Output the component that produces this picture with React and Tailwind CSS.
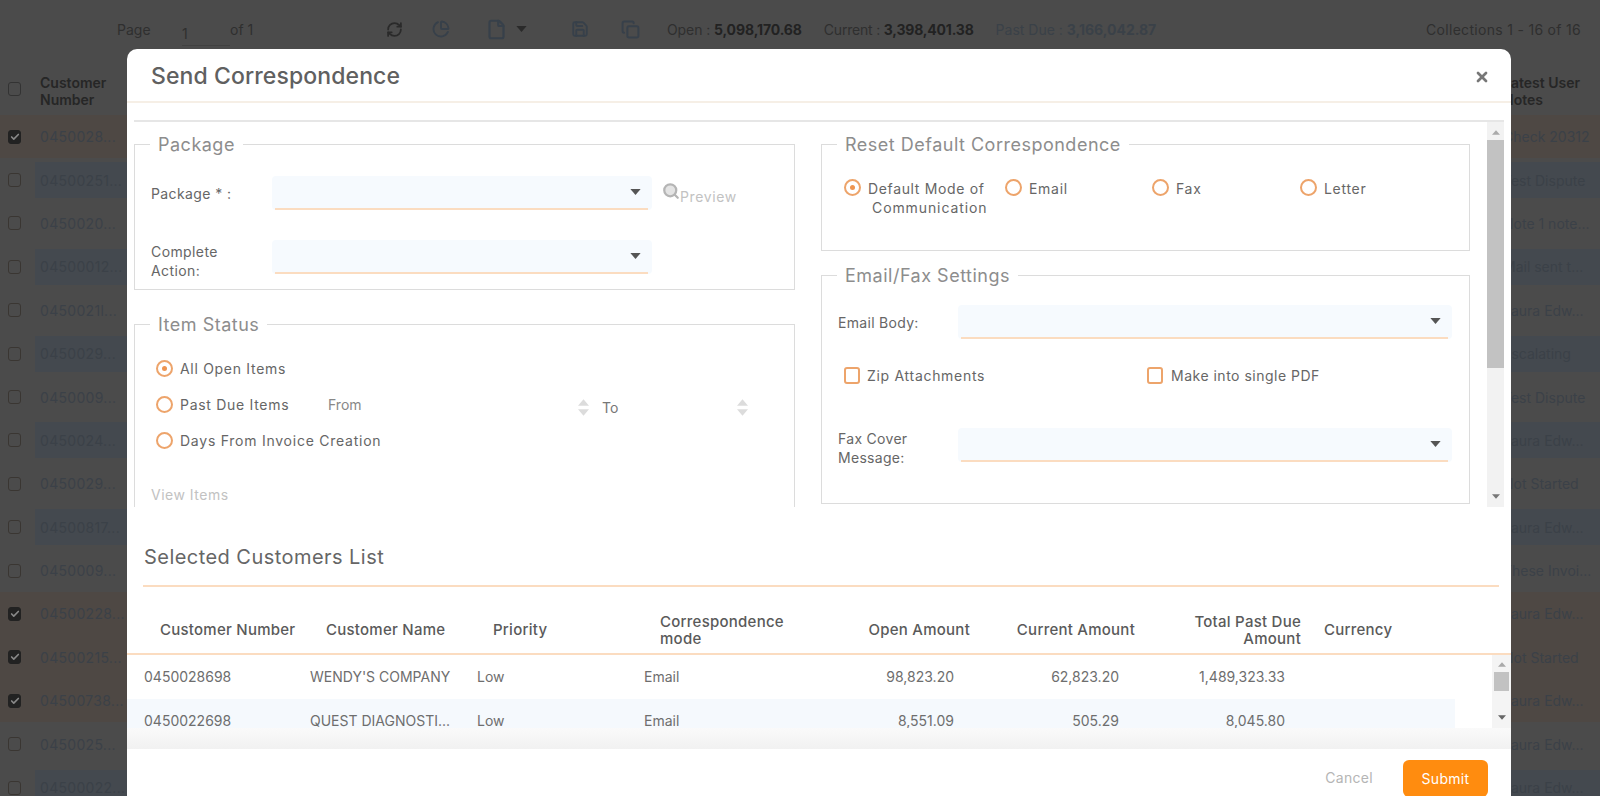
import React from 'react';
import { RefreshCw, PieChart, File, Save, Copy, Check, X, Search } from 'lucide-react';

const leftRows = [
  ['0450028...', true, 'o', 'Check 20312'],
  ['04500251...', false, 'b', 'Test Dispute'],
  ['0450020...', false, '', 'Note 1 note...'],
  ['04500012...', false, 'b', 'Mail sent t...'],
  ['0450021l...', false, '', 'Laura Edw...'],
  ['0450029...', false, 'b', 'Escalating'],
  ['0450009...', false, '', 'Test Dispute'],
  ['0450024...', false, 'b', 'Laura Edw...'],
  ['0450029...', false, '', 'Not Started'],
  ['04500817...', false, 'b', 'Laura Edw...'],
  ['0450009...', false, '', 'These Invoi...'],
  ['04500228...', true, 'o', 'Laura Edw...'],
  ['04500215...', true, 'o', 'Not Started'],
  ['04500738...', true, 'o', 'Laura Edw...'],
  ['0450025...', false, '', 'Laura Edw...'],
  ['04500022...', false, 'b', 'Laura Edw...'],
];

function Caret({ className }) {
  return (
    <svg width="11" height="6" viewBox="0 0 12 7" className={className}>
      <path d="M0 0h12L6 7z" fill="currentColor" />
    </svg>
  );
}

function SelectBox({ className }) {
  return (
    <div className={`relative h-[34px] bg-[#f6fafe] rounded-[4px] ${className}`}>
      <div className="absolute left-[3px] right-[4px] bottom-0 h-[2px] bg-[#fbdcc0]" />
      <Caret className="absolute right-[11px] top-[13px] text-[#555]" />
    </div>
  );
}

function Radio({ on }) {
  return (
    <span className="flex items-center justify-center w-[17px] h-[17px] rounded-full border-2 border-[#eda46b] shrink-0">
      {on && <span className="w-[5px] h-[5px] rounded-full bg-[#ee9450]" />}
    </span>
  );
}

function Spin() {
  return (
    <span className="flex flex-col gap-[3px] mt-[6px] text-[#dcdcdc]">
      <Caret className="rotate-180 w-[11px] h-[7px]" />
      <Caret className="w-[11px] h-[7px]" />
    </span>
  );
}

function Box({ legend, className, children }) {
  return (
    <fieldset className={`border border-[#dcdcdc] pl-[16px] ${className}`}>
      <legend className="-ml-[1px] px-[8px] pt-[2px] text-[18px] leading-[24px] text-[#8d8d8d] tracking-[0.5px]">{legend}</legend>
      {children}
    </fieldset>
  );
}

export default function App() {
  return (
    <div className="relative w-[1600px] h-[796px] overflow-hidden bg-[#4b4b4b] text-[#2e2e2e] text-[14px]" style={{ fontFamily: 'Inter, "Noto Sans", sans-serif' }}>
      {/* dimmed page behind the dialog */}
      <div className="flex items-center h-[58px] pt-[0px] text-[#2f2f2f]">
        <span className="ml-[117px] w-[65px]">Page</span>
        <span className="w-[48px] border-b border-[#414141] h-[34px] pt-[11px]">1</span>
        <span className="w-[130px]">of 1</span>
        <div className="flex items-center text-[#37404a]">
          <RefreshCw size={17} strokeWidth={2.5} className="ml-[26px] text-[#2a2a2a]" />
          <PieChart size={18} strokeWidth={2.5} className="ml-[29px]" />
          <File size={21} strokeWidth={2.5} className="ml-[36px]" />
          <Caret className="ml-[9px] text-[#2a2a2a]" />
          <Save size={18} strokeWidth={2.5} className="ml-[44px]" />
          <Copy size={19} strokeWidth={2.5} className="ml-[32px]" />
        </div>
        <span className="ml-[27px] -tracking-[0.1px]">Open : <b className="text-[#222]">5,098,170.68</b></span>
        <span className="ml-[22px] -tracking-[0.2px]">Current : <b className="text-[#222]">3,398,401.38</b></span>
        <span className="ml-[22px] text-[#3a4148]">Past Due : <b>3,166,042.87</b></span>
        <span className="ml-auto mr-[19px] tracking-[0.3px]">Collections 1 - 16 of 16</span>
      </div>
      <div className="flex items-center h-[57px] font-semibold text-[#262626] leading-[17px]">
        <span className="ml-[8px] mt-[4px] w-[13px] h-[14px] border border-[#333] rounded-[3px]" />
        <span className="ml-[19px] mt-[8px] w-[80px]">Customer Number</span>
        <span className="ml-auto mt-[8px] w-[97px]">Latest User Notes</span>
      </div>
      <div className="flex flex-col">
        {leftRows.map(([n, c, t, note], i) => (
          <div key={i} className={`flex items-center h-[43.4px] ${t === 'o' ? 'bg-[#4e4844]' : ''}`}>
            <span className={`ml-[8px] w-[13px] h-[14px] rounded-[3px] flex items-center justify-center border ${c ? 'bg-[#222] border-[#222]' : 'border-[#3a3632]'}`}>
              {c && <Check size={10} strokeWidth={4} className="text-[#888]" />}
            </span>
            <span className={`ml-[14px] w-[95px] h-[36px] pl-[5px] flex items-center text-[#3b4148] tracking-[0.3px] ${t === 'b' ? 'bg-[#44494f]' : ''}`}>{n}</span>
            <span className={`ml-auto w-[97px] h-[36px] flex items-center whitespace-nowrap text-[#3b4148] ${t === 'b' ? 'bg-[#44494f]' : ''}`}>{note}</span>
          </div>
        ))}
      </div>

      {/* dialog */}
      <div className="absolute left-[127px] top-[49px] w-[1384px] h-[747px] bg-white rounded-t-[10px] overflow-hidden flex flex-col text-[#666]">
        <div className="flex items-center justify-between h-[54px] pt-[3px] shrink-0 border-b-2 border-[#f6efe6] pl-[24px] pr-[21px]">
          <span className="text-[23px] font-medium text-[#606060] tracking-[0.1px]">Send Correspondence</span>
          <X size={16} strokeWidth={4} className="text-[#777]" />
        </div>
        <div className="mx-[7px] mt-[17px] h-[387px] shrink-0 border-t-2 border-[#e6e6e6] flex">
          <div className="flex-1 flex gap-[26px] overflow-hidden pr-[16px]">
            <div className="w-[661px] shrink-0">
              <Box legend="Package" className="mt-[9px] h-[159px]">
                <div className="flex items-center mt-[19px]">
                  <span className="w-[121px] tracking-[0.4px]">Package * :</span>
                  <SelectBox className="w-[380px]" />
                  <Search size={18} strokeWidth={3} fill="#e4e4e4" className="ml-[10px] -mt-[4px] text-[#b5b5b5]" />
                  <span className="mt-[6px] text-[#c2c2c2] tracking-[0.6px]">Preview</span>
                </div>
                <div className="flex items-center mt-[24px]">
                  <span className="w-[121px] mt-[8px] leading-[19px] tracking-[0.4px]">Complete<br />Action:</span>
                  <SelectBox className="w-[380px]" />
                </div>
              </Box>
              <Box legend="Item Status" className="mt-[21px] h-[240px] border-b-0">
                <div className="flex items-center gap-[7px] ml-[5px] h-[21px] mt-[21px]"><Radio on /><span className="tracking-[0.7px]">All Open Items</span></div>
                <div className="flex items-center h-[21px] mt-[15px] ml-[5px]">
                  <Radio />
                  <span className="ml-[7px] w-[148px] tracking-[0.7px]">Past Due Items</span>
                  <span className="w-[250px] text-[#888]">From</span>
                  <Spin />
                  <span className="ml-[13px] w-[135px] mt-[6px] text-[#777]">To</span>
                  <Spin />
                </div>
                <div className="flex items-center gap-[7px] h-[21px] ml-[5px] mt-[15px]"><Radio /><span className="tracking-[0.75px]">Days From Invoice Creation</span></div>
                <div className="mt-[33px] text-[#c2c2c2] tracking-[0.5px]">View Items</div>
              </Box>
            </div>
            <div className="w-[649px] shrink-0">
              <Box legend="Reset Default Correspondence" className="mt-[9px] h-[120px]">
                <div className="flex items-start mt-[22px] ml-[6px]">
                  <div className="w-[161px] flex items-start gap-[7px]">
                    <Radio on />
                    <span className="leading-[19px] tracking-[0.65px]">Default Mode of<br /><span className="ml-[4px] tracking-[0.9px]">Communication</span></span>
                  </div>
                  <div className="w-[147px] flex items-start gap-[7px]"><Radio /><span className="leading-[19px] tracking-[0.7px]">Email</span></div>
                  <div className="w-[148px] flex items-start gap-[7px]"><Radio /><span className="leading-[19px] tracking-[0.7px]">Fax</span></div>
                  <div className="flex items-start gap-[7px]"><Radio /><span className="leading-[19px] tracking-[0.7px]">Letter</span></div>
                </div>
              </Box>
              <Box legend="Email/Fax Settings" className="mt-[11px] h-[242px]">
                <div className="flex items-center mt-[17px]">
                  <span className="w-[120px] tracking-[0.3px]">Email Body:</span>
                  <SelectBox className="w-[494px]" />
                </div>
                <div className="flex items-center mt-[26px] ml-[6px]">
                  <span className="w-[16px] h-[17px] border-2 border-[#eda46b] rounded-[3px]" />
                  <span className="ml-[7px] w-[280px] tracking-[0.7px]">Zip Attachments</span>
                  <span className="w-[16px] h-[17px] border-2 border-[#eda46b] rounded-[3px]" />
                  <span className="ml-[8px] tracking-[0.5px]">Make into single PDF</span>
                </div>
                <div className="flex items-center mt-[37px]">
                  <span className="w-[120px] mt-[6px] leading-[19px] tracking-[0.3px]">Fax Cover<br />Message:</span>
                  <SelectBox className="w-[494px]" />
                </div>
              </Box>
            </div>
          </div>
          <div className="w-[17px] shrink-0 bg-[#f2f2f2] flex flex-col items-center text-[#777]">
            <Caret className="rotate-180 w-[8px] h-[5px] mt-[8px] text-[#aaa]" />
            <div className="w-full h-[228px] mt-[5px] bg-[#c2c2c2]" />
            <Caret className="w-[8px] h-[5px] mt-auto mb-[8px]" />
          </div>
        </div>

        <div className="ml-[17px] mt-[36px] text-[20px] leading-[28px] text-[#666] tracking-[0.45px] shrink-0">Selected Customers List</div>
        <div className="ml-[16px] mr-[12px] mt-[14px] border-t-2 border-[#fbdcc0] shrink-0" />
        <div className="grid grid-cols-[166px_167px_167px_156px_154px_165px_166px_1fr] pl-[33px] pt-[19px] items-center h-[68px] shrink-0 border-b-2 border-[#fbdcc0] font-medium text-[#5a5a5a] text-[15px] tracking-[0.25px] leading-[17px]">
          <span>Customer Number</span>
          <span>Customer Name</span>
          <span>Priority</span>
          <span>Correspondence<br />mode</span>
          <span className="text-right">Open Amount</span>
          <span className="text-right">Current Amount</span>
          <span className="text-right">Total Past Due<br />Amount</span>
          <span className="pl-[23px]">Currency</span>
        </div>
        <div className="relative h-[73px] shrink-0 overflow-hidden">
          <div className="w-[1328px] text-[#6e6e6e]">
            {[
              ['0450028698', "WENDY'S COMPANY", 'Low', 'Email', '98,823.20', '62,823.20', '1,489,323.33', false],
              ['0450022698', 'QUEST DIAGNOSTI...', 'Low', 'Email', '8,551.09', '505.29', '8,045.80', true],
            ].map((r, i) => (
              <div key={i} className={`grid grid-cols-[166px_167px_167px_156px_154px_165px_166px] pl-[17px] items-center h-[43.5px] ${r[7] ? 'bg-[#f5f9fd]' : ''}`}>
                <span>{r[0]}</span><span>{r[1]}</span><span>{r[2]}</span><span>{r[3]}</span>
                <span className="text-right">{r[4]}</span><span className="text-right">{r[5]}</span><span className="text-right">{r[6]}</span>
              </div>
            ))}
          </div>
          <div className="absolute right-0 top-0 bottom-0 w-[19px] bg-[#f4f4f4] flex flex-col items-center text-[#666]">
            <Caret className="rotate-180 w-[8px] h-[5px] mt-[7px] text-[#aaa]" />
            <div className="w-[15px] h-[19px] mt-[5px] bg-[#c2c2c2]" />
            <Caret className="w-[8px] h-[5px] mt-auto mb-[8px]" />
          </div>
        </div>
        <div className="h-[21px] shrink-0 bg-gradient-to-b from-[#fafafa] to-[#f1f1f1]" />
        <div className="flex items-start justify-end pt-[11px] pr-[23px] gap-[30px]">
          <span className="mt-[7px] text-[#b5b5b5] tracking-[0.3px]">Cancel</span>
          <button className="w-[85px] h-[37px] bg-[#ff8c0f] text-white rounded-[6px] tracking-[0.3px]">Submit</button>
        </div>
      </div>
    </div>
  );
}
